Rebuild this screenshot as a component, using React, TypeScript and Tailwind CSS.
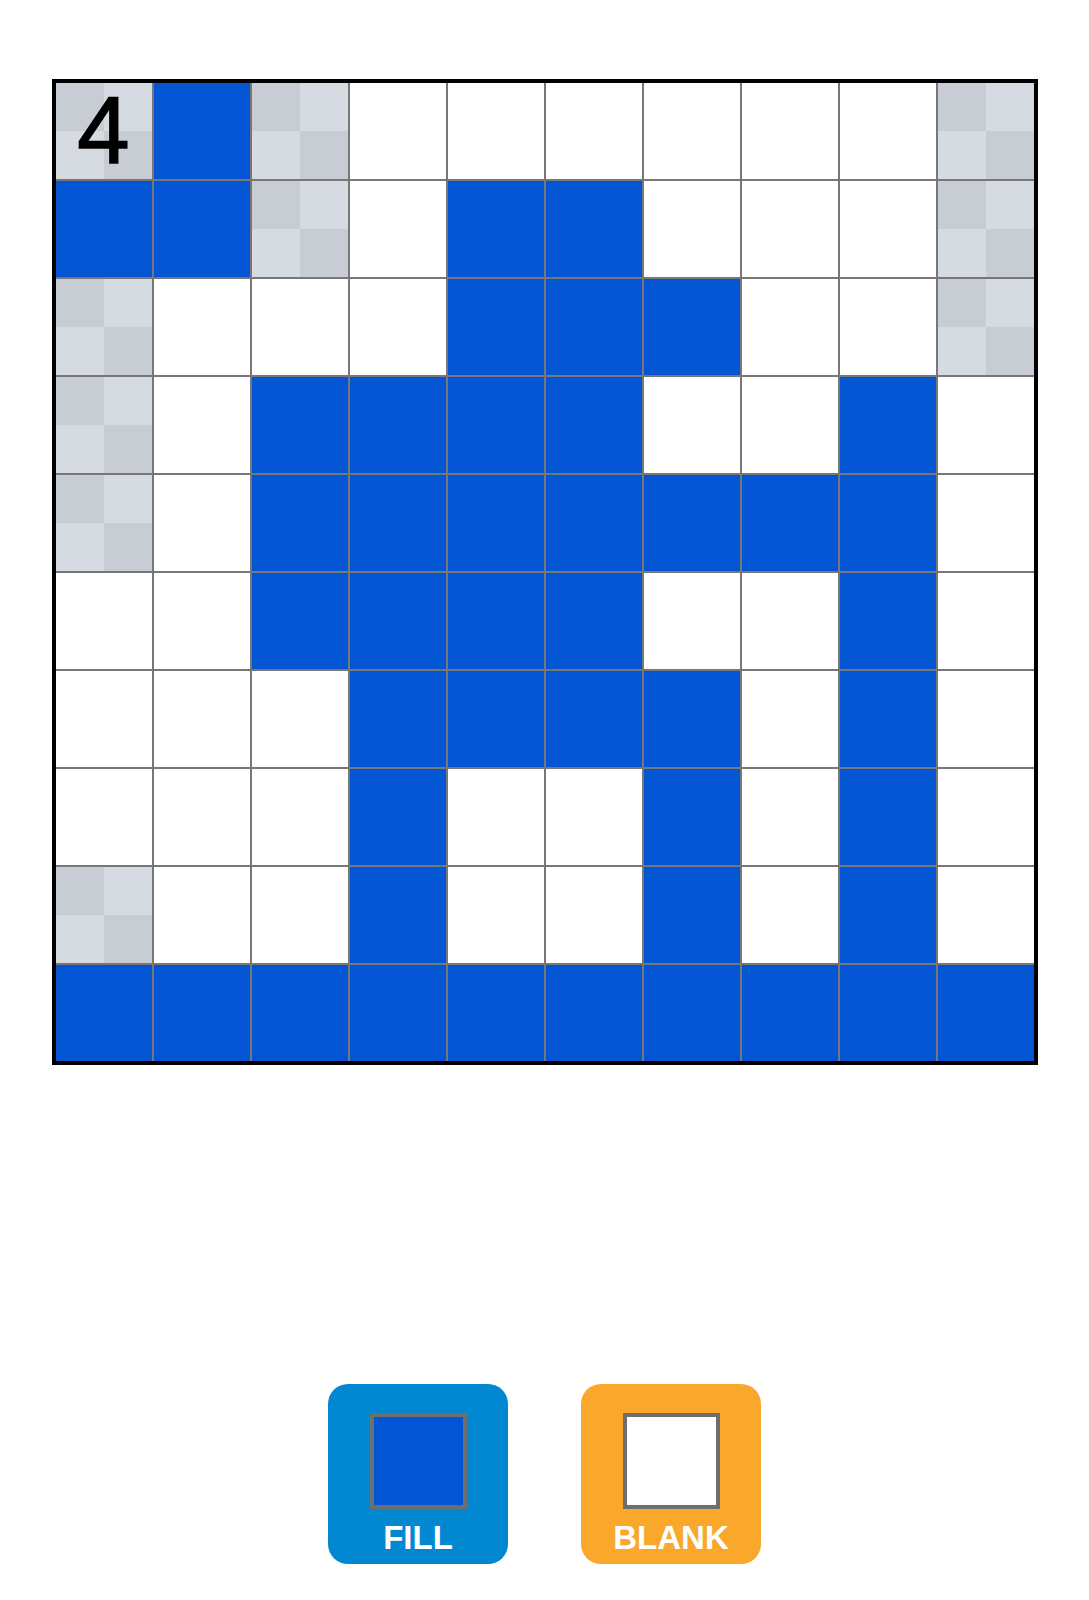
const BOARD = [
  "GBGWWWWWWG",
  "BBGWBBWWWG",
  "GWWWBBBWWG",
  "GWBBBBWWBW",
  "GWBBBBBBBW",
  "WWBBBBWWBW",
  "WWWBBBBWBW",
  "WWWBWWBWBW",
  "GWWBWWBWBW",
  "BBBBBBBBBB",
];

const Checker = ({ label }: { label?: string }) => (
  <div className="relative grid h-full w-full grid-cols-2 grid-rows-2">
    <div className="bg-[#c8ccd3]" />
    <div className="bg-[#d6dae1]" />
    <div className="bg-[#d6dae1]" />
    <div className="bg-[#c8ccd3]" />
    {label && (
      <span className="absolute inset-0 flex items-center justify-center font-['Liberation_Sans',Arial,sans-serif] text-[94px] leading-none text-black [-webkit-text-stroke:1.5px_black]">
        {label}
      </span>
    )}
  </div>
);

const Cell = ({ kind, label }: { kind: string; label?: string }) => {
  if (kind === "B") return <div className="h-[96px] w-[96px] bg-[#0455d4]" />;
  if (kind === "G")
    return (
      <div className="h-[96px] w-[96px]">
        <Checker label={label} />
      </div>
    );
  return <div className="h-[96px] w-[96px] bg-white" />;
};

const ToolButton = ({ color, swatch, text }: { color: string; swatch: string; text: string }) => (
  <button className={`flex h-[180px] w-[180px] flex-col items-center rounded-[20px] pt-[29px] ${color}`}>
    <div className={`h-[96px] w-[97px] border-[4px] border-[#6e6e6e] ${swatch}`} />
    <span className="mt-[12px] font-['Liberation_Sans',Arial,sans-serif] text-[33px] font-bold leading-none text-white">
      {text}
    </span>
  </button>
);

export default function App() {
  return (
    <div className="flex min-h-[1600px] w-full flex-col items-center bg-white pt-[79px]">
      <div className="grid grid-cols-10 gap-[2px] border-[4px] border-black bg-[#777777]">
        {BOARD.map((row, r) =>
          row.split("").map((kind, c) => (
            <Cell key={`${r}-${c}`} kind={kind} label={r === 0 && c === 0 ? "4" : undefined} />
          ))
        )}
      </div>

      <div className="mt-[319px] flex gap-[73px]">
        <ToolButton color="bg-[#0288d1]" swatch="bg-[#0455d4]" text="FILL" />
        <ToolButton color="bg-[#f9a82b]" swatch="bg-white" text="BLANK" />
      </div>
    </div>
  );
}
